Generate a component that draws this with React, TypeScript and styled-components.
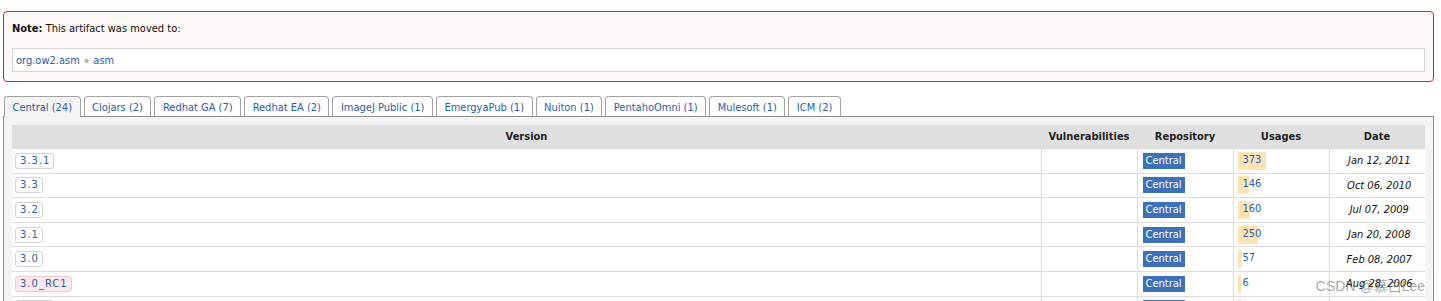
import styled, { createGlobalStyle } from "styled-components";

type Release = {
  version: string;
  usages: number;
  date: string;
  preview?: boolean;
};

const TABS = [
  "Central (24)",
  "Clojars (2)",
  "Redhat GA (7)",
  "Redhat EA (2)",
  "ImageJ Public (1)",
  "EmergyaPub (1)",
  "Nuiton (1)",
  "PentahoOmni (1)",
  "Mulesoft (1)",
  "ICM (2)",
];

const RELEASES: Release[] = [
  { version: "3.3.1", usages: 373, date: "Jan 12, 2011" },
  { version: "3.3", usages: 146, date: "Oct 06, 2010" },
  { version: "3.2", usages: 160, date: "Jul 07, 2009" },
  { version: "3.1", usages: 250, date: "Jan 20, 2008" },
  { version: "3.0", usages: 57, date: "Feb 08, 2007" },
  { version: "3.0_RC1", usages: 6, date: "Aug 28, 2006", preview: true },
  { version: "2.2.3", usages: 40, date: "Jun 21, 2006" },
];

const FONT = `"DejaVu Sans Condensed", "DejaVu Sans", sans-serif`;
const LINK = "#2c5ba8";

const GlobalStyle = createGlobalStyle`
  body {
    margin: 0;
    background: #ffffff;
    font-family: ${FONT};
    font-size: 11px;
    color: #111;
  }
`;

const Page = styled.div`
  position: relative;
  padding: 11px 7px 0 3px;
  height: 290px;
  overflow: hidden;
`;

const NoteBox = styled.div`
  border: 1px solid #dc2424;
  border-radius: 4px;
  background: #fdf8f8;
  padding: 10px 8px 9px 8px;
`;

const NoteTitle = styled.div`
  line-height: 14px;
  font-size: 11px;
  color: #111;

  b {
    font-weight: 700;
  }
`;

const MovedBox = styled.div`
  margin-top: 12px;
  height: 22px;
  border: 1px solid #d8d8d8;
  background: #ffffff;
  display: flex;
  align-items: center;
  padding-left: 3px;
  gap: 4px;
`;

const Link = styled.a`
  color: ${LINK};
  text-decoration: none;
`;

const Crumb = styled.span`
  color: #666;
  font-size: 10px;
`;

const TabBar = styled.div`
  display: flex;
  gap: 3px;
  margin-top: 14px;
  padding-left: 1px;
  position: relative;
  z-index: 1;
  margin-bottom: -1px;
  align-items: flex-end;
`;

const Tab = styled.div<{ $active?: boolean }>`
  height: ${({ $active }) => ($active ? "20px" : "19px")};
  padding: 0 7.5px;
  border: 1px solid #a3a3a3;
  border-bottom: none;
  border-radius: 4px 4px 0 0;
  background: ${({ $active }) => ($active ? "#f4f4f4" : "#ffffff")};
  color: ${LINK};
  line-height: 21px;
  white-space: nowrap;
  margin-bottom: ${({ $active }) => ($active ? "0" : "1px")};
`;

const Panel = styled.div`
  border: 1px solid #8c8c8c;
  background: #f4f4f4;
  padding: 8px;
  min-height: 200px;
`;

const Table = styled.table`
  width: 100%;
  border-collapse: collapse;
  table-layout: fixed;
  background: #ffffff;
`;

const Th = styled.th<{ $width?: number }>`
  width: ${({ $width }) => ($width ? `${$width}px` : "auto")};
  height: 23px;
  padding: 0;
  background: #dfdfdf;
  font-weight: 700;
  font-size: 11px;
  color: #222;
  text-align: center;
`;

const Td = styled.td<{ $align?: string }>`
  height: 23.6px;
  padding: 0 0 0 4px;
  border-top: 1px solid #dddddd;
  border-left: 1px solid #dddddd;
  text-align: ${({ $align }) => $align || "left"};
  vertical-align: middle;

  &:first-child {
    border-left: none;
    padding-left: 3px;
  }
`;

const VersionTag = styled.a<{ $preview?: boolean }>`
  display: inline-block;
  height: 14px;
  line-height: 14px;
  padding: 0 3px 0 4px;
  border: 1px solid ${({ $preview }) => ($preview ? "#efc9d1" : "#d3d3d3")};
  border-radius: 3px;
  background: ${({ $preview }) => ($preview ? "#fce9ed" : "#ffffff")};
  color: ${LINK};
  font-family: "DejaVu Sans", sans-serif;
  font-size: 10px;
  letter-spacing: 1px;
  text-decoration: none;
`;

const RepoBadge = styled.span`
  display: inline-block;
  height: 16px;
  line-height: 16px;
  padding: 0 3px;
  margin-left: 1px;
  background: #3d71b6;
  color: #ffffff;
  font-size: 11px;
`;

const UsageBar = styled.a`
  display: inline-block;
  height: 18px;
  line-height: 16px;
  padding: 0 5px;
  color: ${LINK};
  text-decoration: none;
  background-image: linear-gradient(#fde3b6, #fde3b6);
  background-repeat: no-repeat;
`;

const DateText = styled.span`
  font-style: italic;
  color: #111;
`;

const Watermark = styled.div`
  position: absolute;
  right: 16px;
  top: 275px;
  font-family: "Liberation Sans", "Noto Sans CJK SC", sans-serif;
  font-size: 14px;
  color: rgba(90, 90, 90, 0.55);
  pointer-events: none;
`;

export default function App() {
  return (
    <>
      <GlobalStyle />
      <Page>
        <NoteBox>
          <NoteTitle>
            <b>Note:</b> This artifact was moved to:
          </NoteTitle>
          <MovedBox>
            <Link>org.ow2.asm</Link>
            <Crumb>»</Crumb>
            <Link>asm</Link>
          </MovedBox>
        </NoteBox>

        <TabBar>
          {TABS.map((tab, i) => (
            <Tab key={tab} $active={i === 0}>
              {tab}
            </Tab>
          ))}
        </TabBar>

        <Panel>
          <Table>
            <thead>
              <tr>
                <Th>Version</Th>
                <Th $width={96}>Vulnerabilities</Th>
                <Th $width={96}>Repository</Th>
                <Th $width={96}>Usages</Th>
                <Th $width={96}>Date</Th>
              </tr>
            </thead>
            <tbody>
              {RELEASES.map((r) => (
                <tr key={r.version}>
                  <Td>
                    <VersionTag $preview={r.preview}>{r.version}</VersionTag>
                  </Td>
                  <Td />
                  <Td>
                    <RepoBadge>Central</RepoBadge>
                  </Td>
                  <Td>
                    <UsageBar
                      style={{
                        backgroundSize: `${Math.max(3, Math.round(r.usages * 0.078))}px 100%`,
                      }}
                    >
                      {r.usages}
                    </UsageBar>
                  </Td>
                  <Td $align="center">
                    <DateText>{r.date}</DateText>
                  </Td>
                </tr>
              ))}
            </tbody>
          </Table>
        </Panel>

        <Watermark>CSDN @慕白Lee</Watermark>
      </Page>
    </>
  );
}
